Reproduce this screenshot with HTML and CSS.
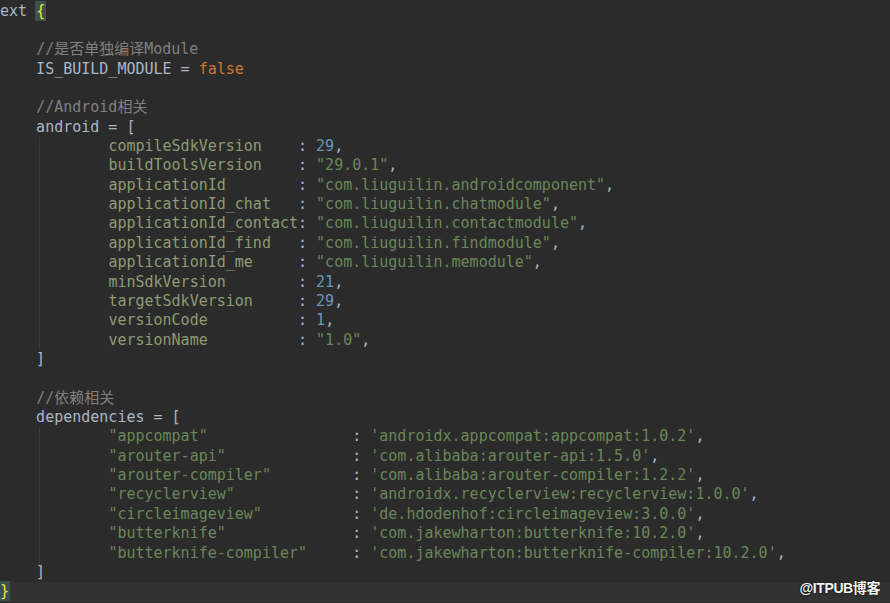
FILE: index.html
```html
<!DOCTYPE html>
<html lang="zh">

<head>
  <meta charset="UTF-8" />
  <meta name="viewport" content="width=device-width, initial-scale=1.0" />
  <title>build.gradle</title>
  <link rel="stylesheet" href="styles.css">
</head>

<body>

  <div class="editor">
    <div class="line">ext <span class="brace">{</span></div>
    <div class="line"> </div>
    <div class="line">    <span class="cmt">//是否单独编译Module</span></div>
    <div class="line">    IS_BUILD_MODULE = <span class="kw">false</span></div>
    <div class="line"> </div>
    <div class="line">    <span class="cmt">//Android相关</span></div>
    <div class="line">    android = [</div>
    <div class="block">
      <div class="line">            <span class="key">compileSdkVersion</span>    : <span class="num">29</span>,</div>
      <div class="line">            <span class="key">buildToolsVersion</span>    : <span class="str">"29.0.1"</span>,</div>
      <div class="line">            <span class="key">applicationId</span>        : <span class="str">"com.liuguilin.androidcomponent"</span>,</div>
      <div class="line">            <span class="key">applicationId_chat</span>   : <span class="str">"com.liuguilin.chatmodule"</span>,</div>
      <div class="line">            <span class="key">applicationId_contact</span>: <span class="str">"com.liuguilin.contactmodule"</span>,</div>
      <div class="line">            <span class="key">applicationId_find</span>   : <span class="str">"com.liuguilin.findmodule"</span>,</div>
      <div class="line">            <span class="key">applicationId_me</span>     : <span class="str">"com.liuguilin.memodule"</span>,</div>
      <div class="line">            <span class="key">minSdkVersion</span>        : <span class="num">21</span>,</div>
      <div class="line">            <span class="key">targetSdkVersion</span>     : <span class="num">29</span>,</div>
      <div class="line">            <span class="key">versionCode</span>          : <span class="num">1</span>,</div>
      <div class="line">            <span class="key">versionName</span>          : <span class="str">"1.0"</span>,</div>
    </div>
    <div class="line">    ]</div>
    <div class="line"> </div>
    <div class="line">    <span class="cmt">//依赖相关</span></div>
    <div class="line">    dependencies = [</div>
    <div class="block">
      <div class="line">            <span class="str">"appcompat"</span>                : <span class="str">'androidx.appcompat:appcompat:1.0.2'</span>,</div>
      <div class="line">            <span class="str">"arouter-api"</span>              : <span class="str">'com.alibaba:arouter-api:1.5.0'</span>,</div>
      <div class="line">            <span class="str">"arouter-compiler"</span>         : <span class="str">'com.alibaba:arouter-compiler:1.2.2'</span>,</div>
      <div class="line">            <span class="str">"recyclerview"</span>             : <span class="str">'androidx.recyclerview:recyclerview:1.0.0'</span>,</div>
      <div class="line">            <span class="str">"circleimageview"</span>          : <span class="str">'de.hdodenhof:circleimageview:3.0.0'</span>,</div>
      <div class="line">            <span class="str">"butterknife"</span>              : <span class="str">'com.jakewharton:butterknife:10.2.0'</span>,</div>
      <div class="line">            <span class="str">"butterknife-compiler"</span>     : <span class="str">'com.jakewharton:butterknife-compiler:10.2.0'</span>,</div>
    </div>
    <div class="line">    ]</div>
    <div class="line current"><span class="brace">}</span></div>
  </div>

  <div class="mark">@ITPUB博客</div>

</body>

</html>
```

FILE: styles.css
```css
body {
  margin: 0;
  background-color: #2b2b2b;
  height: 603px;
  overflow: hidden;
  position: relative;
}

.editor {
  padding-top: 1.5px;
  font-family: "DejaVu Sans Mono", "Noto Sans CJK SC", monospace;
  font-size: 15px;
  color: #a9b7c6;
}

.line {
  height: 19.37px;
  line-height: 19.37px;
  white-space: pre;
}

.block {
  background: linear-gradient(#3a3a3a, #3a3a3a) 39px 0 / 1px 100% no-repeat;
}

.current {
  background-color: #323232;
}

.brace {
  color: #f0e442;
  background-color: #3b514d;
  outline: 1px solid #3b514d;
}

.cmt {
  color: #808080;
}

.kw {
  color: #cc7832;
}

.num {
  color: #6897bb;
}

.str {
  color: #6a8759;
}

.key {
  color: #8d9c74;
}

.mark {
  position: absolute;
  right: 10px;
  bottom: 6px;
  font-family: "Liberation Sans", "Noto Sans CJK SC", sans-serif;
  font-weight: bold;
  font-size: 14px;
  letter-spacing: -0.4px;
  color: #f4f4f4;
  text-shadow: 0 0 2px #000;
}
```
